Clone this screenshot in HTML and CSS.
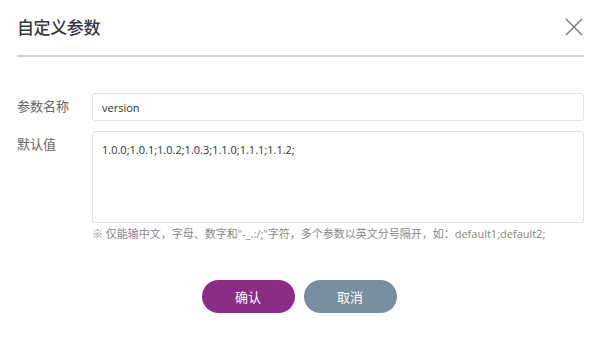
FILE: index.html
```html
<!DOCTYPE html>
<html lang="zh-CN">
<head>
    <meta charset="UTF-8">
    <title>自定义参数</title>
    <link rel="stylesheet" href="styles.css">
</head>
<body>
    <div class="dialogo">
        <div class="cabecera">
            <h2 class="titulo">自定义参数</h2>
            <button class="cerrar" aria-label="关闭">
                <svg width="18" height="18" viewBox="0 0 18 18">
                    <path d="M1 1 L17 17 M17 1 L1 17" stroke="#777" stroke-width="1.3" fill="none"/>
                </svg>
            </button>
        </div>

        <div class="formulario">
            <div class="fila">
                <label class="etiqueta">参数名称</label>
                <input class="campo" type="text" value="version">
            </div>
            <div class="fila">
                <label class="etiqueta">默认值</label>
                <div class="grupo">
                    <textarea class="campo area">1.0.0;1.0.1;1.0.2;1.0.3;1.1.0;1.1.1;1.1.2;</textarea>
                    <p class="nota">※ 仅能输中文，字母、数字和"-_.:/;"字符，多个参数以英文分号隔开，如：default1;default2;</p>
                </div>
            </div>
        </div>

        <div class="acciones">
            <button class="boton confirmar">确认</button>
            <button class="boton cancelar">取消</button>
        </div>
    </div>
</body>
</html>
```

FILE: styles.css
```css
:root {
    --color-morado: #8c2c84;
    --color-gris: #7a8ea2;
    --color-borde: #e3e3e3;
    --color-texto: #333;
    --fuente: 'Open Sans', 'Noto Sans CJK SC', sans-serif;
}

* {
    margin: 0; padding: 0; box-sizing: border-box;
}

body {
    font-family: var(--fuente);
    background: #fff;
    color: var(--color-texto);
    width: 600px; height: 340px;
    overflow: hidden;
}

.dialogo {
    padding: 0 16px 0 17px;
}

.cabecera {
    height: 57px;
    display: flex; align-items: center; justify-content: space-between;
    border-bottom: 2px solid #d2d2d2;
    padding-bottom: 2px;
}

.titulo {
    font-size: 17px; font-weight: 500;
    color: #343747;
    letter-spacing: -0.4px;
}

.cerrar {
    background: none; border: none;
    width: 18px; height: 18px;
    margin-right: 1px;
    display: flex;
}

.formulario {
    padding-top: 36px;
    display: flex; flex-direction: column; gap: 10px;
}

.fila {
    display: flex; align-items: flex-start;
}

.etiqueta {
    width: 75px; flex-shrink: 0;
    font-size: 13px; color: #666;
    padding-top: 4px;
    line-height: 18px;
}

.grupo {
    flex: 1;
    display: flex; flex-direction: column;
}

.campo {
    flex: 1;
    height: 28px;
    border: 1px solid var(--color-borde);
    border-radius: 3px;
    padding: 0 9px;
    font-family: var(--fuente);
    font-size: 11px; color: var(--color-texto);
    outline: none;
}

.area {
    flex: none;
    height: 92px;
    padding: 9px 9px;
    resize: none;
    line-height: 18px;
}

.nota {
    margin-top: 3px;
    font-size: 11px; color: #888;
    line-height: 16px;
}

.acciones {
    display: flex; justify-content: center;
    gap: 9px;
    padding-top: 38px;
    padding-right: 3px;
}

.boton {
    width: 93px; height: 33px;
    border: none; border-radius: 17px;
    color: #fff;
    font-family: var(--fuente);
    font-size: 13px;
}

.confirmar { background-color: var(--color-morado); }
.cancelar { background-color: var(--color-gris); }
```
